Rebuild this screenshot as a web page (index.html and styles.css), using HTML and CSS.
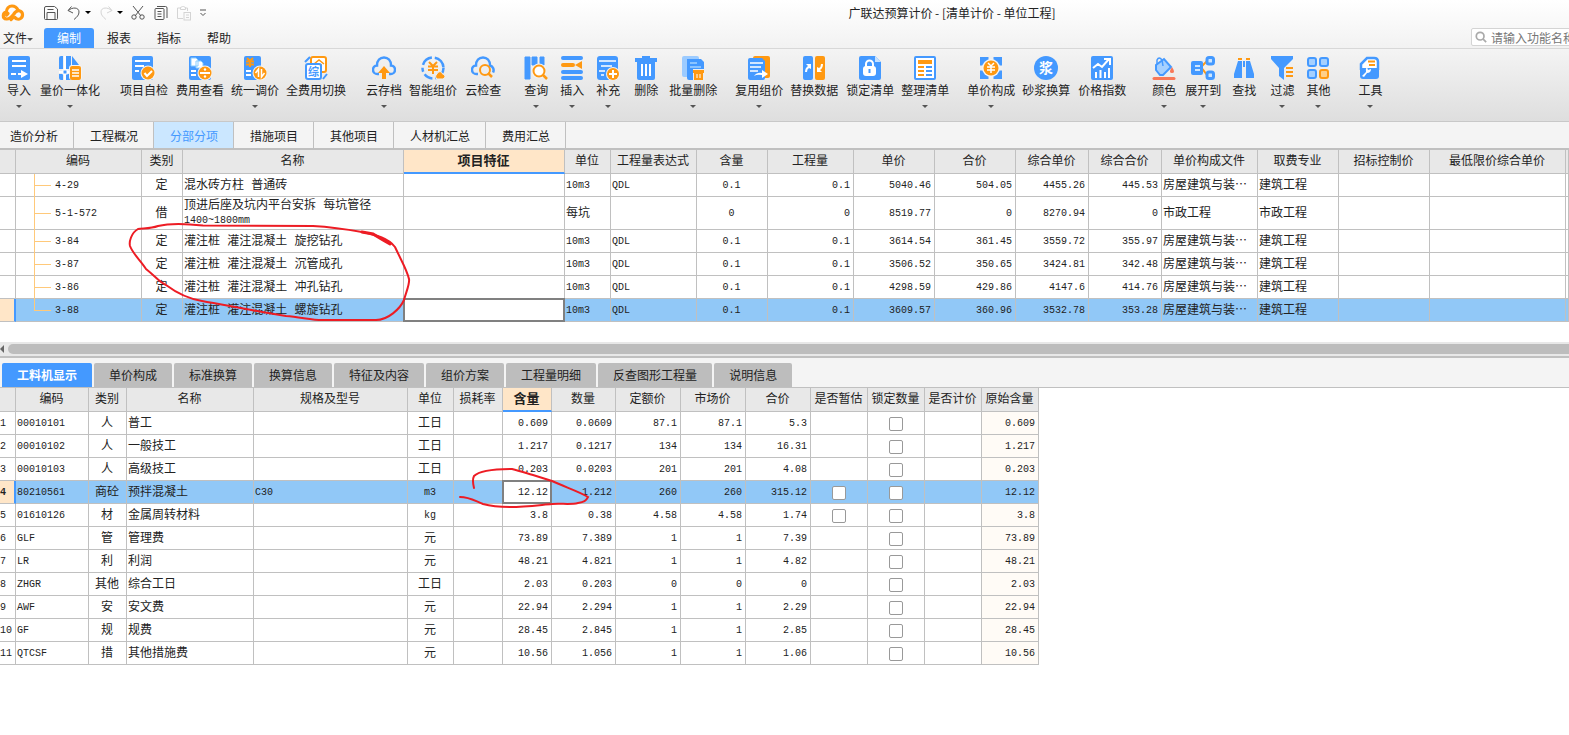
FILE: index.html
```
<!DOCTYPE html>
<html lang="zh-CN">
<head>
<meta charset="UTF-8">
<meta name="viewport" content="width=device-width, initial-scale=1.0">
<title>广联达预算计价</title>
<link rel="stylesheet" href="styles.css">
</head>
<body>
<header class="top">
  <div class="title-bar">
    <svg class="logo" viewBox="0 0 24 18"><g fill="none" stroke="#ff9912" stroke-width="3.200" stroke-linecap="round"><path d="M5.500 8.500C5 4.500 8 2 11 2c3.500 0 5 2 6 4"/><path d="M5.500 8C1.500 8.500 1 14.500 5.500 15c3 .3 5-2 7-4.500 2-3 4-4.500 6.500-3.500 3 1 3.500 5.500.5 7.500-2 1.200-4.500.5-5.500-1"/><path d="M7 9.500l-1.500 1.500M10 15.500l2-2"/></g></svg>
    <div class="quick">
      <button aria-label="保存"><svg viewBox="0 0 16 16"><path d="M3 1.500h8.500L14.500 4v9.500a1 1 0 0 1-1 1h-11a1 1 0 0 1-1-1V3a1.500 1.500 0 0 1 1.500-1.500zM4 14V7.500h8V14M4.500 4.500h6"/></svg></button>
      <button aria-label="撤销"><svg viewBox="0 0 16 16"><path d="M5.500 1.500L2 5.500l5 2.500M2.500 5.500C6 2 13 2 13 7c0 3-2 5-5 7.500"/></svg></button>
      <span class="caret"></span>
      <button class="off" aria-label="重做"><svg viewBox="0 0 16 16"><path d="M10.500 1.500L14 5.500 9 8M13.500 5.500C10 2 3 2 3 7c0 3 2 5 5 7.500"/></svg></button>
      <span class="caret"></span>
      <button aria-label="剪切"><svg viewBox="0 0 16 16"><path d="M3 1l8 10M13 1L5 11"/><circle cx="4" cy="12" r="2.200"/><circle cx="12" cy="12" r="2.200"/></svg></button>
      <button aria-label="复制"><svg viewBox="0 0 16 16"><rect x="2" y="3.500" width="9" height="11" rx="1"/><path d="M4 1.500h8.500a1.500 1.500 0 0 1 1.500 1.500v10M4.500 6.500h4M4.500 9h4M4.500 11.500h4"/></svg></button>
      <button class="off" aria-label="粘贴"><svg viewBox="0 0 16 16"><path d="M7 13.500H1.500V3H5M9 3h2.500v3M4.500 4.500v-2l2-1h1l2 1v2z"/><rect x="8" y="7.500" width="6.500" height="7.500"/><path d="M10 10h3M10 12.500h3"/></svg></button>
      <button class="more" aria-label="更多"><svg viewBox="0 0 8 8"><path d="M1 1h6M1.500 4L4 6.500 6.500 4"/></svg></button>
    </div>
    <div class="title">广联达预算计价 - [清单计价 - 单位工程]</div>
  </div>
  <div class="menu-bar">
    <button class="file">文件<span class="arrow"></span></button>
    <button class="active">编制</button>
    <button>报表</button>
    <button>指标</button>
    <button>帮助</button>
    <label class="search">
      <svg viewBox="0 0 14 14"><circle cx="6" cy="6" r="4.500"/><path d="M9.500 9.500L13 13"/></svg>
      <input type="text" placeholder="请输入功能名称" aria-label="搜索功能">
    </label>
  </div>
</header>

<div class="ribbon">
  <div class="group">
    <button class="tool short"><svg viewBox="0 0 24 24"><rect x="1" width="22" height="24" rx="2" fill="#49f"/><path d="M5 5h14M5 10h14" stroke="#fff" stroke-width="2"/><path d="M4 18h5M11 18h6" stroke="#fff" stroke-width="2"/><path d="M14 14l7 4-7 4z" fill="#fff"/></svg>导入<span class="arrow"></span></button>
    <button class="tool"><svg viewBox="0 0 24 24"><path d="M1 2a2 2 0 0 1 2-2h2v13H1zM6 0h7v13H6zM14 0l7 9h-7zM1 18h4v6H3a2 2 0 0 1-2-2zM8 18h5v6H8z" fill="#49f"/><path d="M7 0v24M1 16h12" stroke="#fff" stroke-width="2"/><rect x="5" y="14" width="4" height="4" fill="#49f" stroke="#fff"/><rect x="11" y="9" width="13" height="15" rx="3" fill="#f4f4f4"/><rect x="12" y="10" width="11" height="14" rx="2" fill="#ff9912"/><path d="M14 14h7M14 17h7M14 20h7" stroke="#fff" stroke-width="1.500"/></svg>量价一体化<span class="arrow"></span></button>
  </div>
  <div class="group">
    <button class="tool plain"><svg viewBox="0 0 24 24"><rect x="0" width="21" height="24" rx="2" fill="#49f"/><path d="M3 5h15M3 10h9M3 15h4" stroke="#fff" stroke-width="2"/><circle cx="16" cy="17" r="7.500" fill="#f4f4f4"/><circle cx="16" cy="17" r="6.500" fill="#ff9912"/><path d="M12.500 17l2.500 3 5-5" stroke="#fff" stroke-width="2" fill="none"/></svg>项目自检</button>
    <button class="tool plain"><svg viewBox="0 0 24 24"><rect x="1" width="22" height="24" rx="2" fill="#49f"/><path d="M3 2h5l2 2v6H3zM8 5h5l2 2v5H8z" fill="#fff" stroke="#8cf"/><path d="M3 15h5M3 19h5" stroke="#fff" stroke-width="2"/><circle cx="17" cy="17" r="7.500" fill="#f4f4f4"/><circle cx="17" cy="17" r="6.500" fill="#ff9912"/><path d="M12 17h10" stroke="#fff" stroke-width="2"/><circle cx="17" cy="13.500" r="1.200" fill="#fff"/><circle cx="17" cy="20.500" r="1.200" fill="#fff"/></svg>费用查看</button>
    <button class="tool"><svg viewBox="0 0 24 24"><rect x="1" width="17" height="24" rx="2" fill="#49f"/><path d="M4 2l3 3 3-3M3 5.500h8M3 8.500h8M7 5v6" stroke="#ff9912" stroke-width="2" fill="none"/><path d="M3 15h5M3 19h5" stroke="#fff" stroke-width="2"/><circle cx="17" cy="17" r="7.500" fill="#f4f4f4"/><circle cx="17" cy="17" r="6.500" fill="#ff9912"/><path d="M15.500 21v-8l-3 4M18.500 13v8l3-4" stroke="#fff" stroke-width="1.500" fill="none"/></svg>统一调价<span class="arrow"></span></button>
    <button class="tool plain"><svg viewBox="0 0 24 24"><rect x="7" y="1" width="15" height="15" rx="2" fill="#fff" stroke="#ff9912" stroke-width="2"/><path d="M10 8l5-4 5 4M12 9h6M15 9v5" stroke="#ff9912" stroke-width="1.500" fill="none"/><path d="M1 6L6 1M19 23l4-5" stroke="#49f" stroke-width="2"/><rect x="2" y="8" width="15" height="15" rx="2" fill="#fff" stroke="#49f" stroke-width="2"/><text x="4" y="20" font-size="11" font-weight="700" fill="#49f">综</text></svg>全费用切换</button>
  </div>
  <div class="group">
    <button class="tool"><svg viewBox="0 0 24 24"><path d="M7 18H5.500a4.200 4.200 0 0 1-.5-8.500C5 4.500 8 1.500 12 1.500s7 3 7 8a4.200 4.200 0 0 1-.5 8.500H17" fill="none" stroke="#49f" stroke-width="2.500"/><path d="M12 10l6 7h-4v6h-4v-6H6z" fill="#ff9912"/></svg>云存档<span class="arrow"></span></button>
    <button class="tool plain"><svg viewBox="0 0 24 24"><circle cx="12" cy="12" r="10.500" fill="none" stroke="#49f" stroke-width="2.500" stroke-dasharray="14 3 9 3 4 3 12 3"/><path d="M8 6l4 4 4-4M7 10.500h10M7 14h10M12 9v9" stroke="#ff9912" stroke-width="2" fill="none"/><path d="M16 23a3 3 0 0 1 0-5c1-3 5-3 5.500 0a2.500 2.500 0 0 1 0 5z" fill="#ff9912" stroke="#f0f0f0"/></svg>智能组价</button>
    <button class="tool plain"><svg viewBox="0 0 24 24"><path d="M7 18H5.500a4.200 4.200 0 0 1-.5-8.500C5 4.500 8 1.500 12 1.500s7 3 7 8c3 1 4.500 4 3 7" fill="none" stroke="#49f" stroke-width="2.500"/><circle cx="14" cy="14" r="5" fill="none" stroke="#ff9912" stroke-width="2"/><path d="M17 17l4 4" stroke="#ff9912" stroke-width="2.500"/></svg>云检查</button>
  </div>
  <div class="group">
    <button class="tool short"><svg viewBox="0 0 24 24"><path d="M1 1h5v22H1zM8 1h5v8H8zM16 1h4v8h-4z" fill="#49f" stroke="#49f" stroke-linejoin="round"/><circle cx="15" cy="15" r="7.500" fill="#f2f2f2"/><circle cx="15" cy="15" r="5.500" fill="#fff" stroke="#ff9912" stroke-width="2"/><path d="M19 19l4 4" stroke="#ff9912" stroke-width="2.500"/></svg>查询<span class="arrow"></span></button>
    <button class="tool short"><svg viewBox="0 0 24 24"><path d="M3 2h18M3 16h18M3 22h18" stroke="#49f" stroke-width="4" stroke-linecap="round"/><path d="M3 9h10" stroke="#ff9912" stroke-width="4" stroke-linecap="round"/><path d="M15 9l7-4v8z" fill="#ff9912"/></svg>插入<span class="arrow"></span></button>
    <button class="tool short"><svg viewBox="0 0 24 24"><rect x="1" width="21" height="24" rx="3" fill="#49f"/><path d="M3 5h17M5 10h11M3 15h6M5 19h3" stroke="#fff" stroke-width="1.500"/><circle cx="17" cy="18" r="7" fill="#f2f2f2"/><circle cx="17" cy="18" r="6" fill="#ff9912"/><path d="M13 18h8M17 14v8" stroke="#fff" stroke-width="2"/></svg>补充<span class="arrow"></span></button>
    <button class="tool short plain"><svg viewBox="0 0 24 24"><path d="M1 2h7V0h8v2h7v4H1z" fill="#49f"/><path d="M3 5h18v17a2 2 0 0 1-2 2H5a2 2 0 0 1-2-2z" fill="#49f"/><path d="M8 8v12M12 8v12M16 8v12" stroke="#fff" stroke-width="2"/></svg>删除</button>
    <button class="tool"><svg viewBox="0 0 24 24"><rect x="1" width="17" height="21" rx="2" fill="#9ccbff"/><path d="M6 3h14l3 3v17a1 1 0 0 1-1 1H8a2 2 0 0 1-2-2z" fill="#49f"/><path d="M9 7h7M9 11h11" stroke="#8cc4ff" stroke-width="2"/><path d="M12 13h12v11H12z" fill="#eee"/><path d="M12 14h11v3H12zM13 17h9v7h-9z" fill="#ff9912"/><path d="M16 18v4M19 18v4" stroke="#fff"/></svg>批量删除<span class="arrow"></span></button>
  </div>
  <div class="group near">
    <button class="tool"><svg viewBox="0 0 24 24"><rect x="6" width="17" height="22" rx="2" fill="#ff9912"/><path d="M1 4a2 2 0 0 1 2-2h12l3 3v17a2 2 0 0 1-2 2H3a2 2 0 0 1-2-2z" fill="#49f"/><path d="M3 7h13M3 11h11M3 15h8" stroke="#fff" stroke-width="1.500"/><path d="M7 20q3-4 8-3v-3l6 4-6 4v-3q-5-1-8 1z" fill="#fff"/></svg>复用组价<span class="arrow"></span></button>
    <button class="tool plain"><svg viewBox="0 0 24 24"><rect x="1" width="10" height="24" rx="2" fill="#49f"/><rect x="13" width="10" height="24" rx="2" fill="#ff9912"/><path d="M3 16q0-4 3-6L4 8h5v5l-2-1q-2 1-2 4zM21 8q0 4-3 6l2 2h-5v-5l2 1q2-1 2-4z" fill="#fff"/></svg>替换数据</button>
    <button class="tool plain"><svg viewBox="0 0 24 24"><path d="M1 2a2 2 0 0 1 2-2h14l6 6v16a2 2 0 0 1-2 2H3a2 2 0 0 1-2-2z" fill="#49f"/><path d="M17 0l6 6h-6z" fill="#c7e2ff"/><rect x="5" y="10" width="13" height="10" rx="3" fill="#fff"/><path d="M8 11V8a3.500 3.500 0 0 1 7 0v3" fill="none" stroke="#fff" stroke-width="2"/><path d="M11.500 13v4" stroke="#49f" stroke-width="2"/></svg>锁定清单</button>
    <button class="tool"><svg viewBox="0 0 24 24"><rect x="2" y="1" width="20" height="22" rx="1" fill="#fff" stroke="#49f" stroke-width="2"/><path d="M5 4h14v4H5z" fill="#ff9912"/><path d="M5 11h6M5 15h6M5 19h6" stroke="#ff9912" stroke-width="2"/><path d="M13 11h6M13 15h6M13 19h6" stroke="#49f" stroke-width="2"/></svg>整理清单<span class="arrow"></span></button>
  </div>
  <div class="group near">
    <button class="tool"><svg viewBox="0 0 24 24"><path d="M1 1h22v22H1z" fill="#49f"/><path d="M12 0v24M0 12h24" stroke="#f0f0f0" stroke-width="5"/><circle cx="12" cy="12" r="9" fill="#f4f4f4"/><circle cx="12" cy="12" r="7.500" fill="#ff9912"/><path d="M9 7l3 3 3-3M8 11h8M8 14h8M12 10v7" fill="none" stroke="#fff" stroke-width="1.500"/></svg>单价构成<span class="arrow"></span></button>
    <button class="tool plain"><svg viewBox="0 0 24 24"><circle cx="12" cy="12" r="12" fill="#49f"/><text x="5" y="17" font-size="14" font-weight="700" fill="#fff">浆</text></svg>砂浆换算</button>
    <button class="tool plain"><svg viewBox="0 0 24 24"><rect x="1" width="22" height="24" rx="2" fill="#49f"/><path d="M3 12l5-4 4 3 7-8M14 3h6v6M6 16v6M10.500 14v8M15 16v6M19 12v10" fill="none" stroke="#fff" stroke-width="2"/></svg>价格指数</button>
  </div>
  <div class="group far">
    <button class="tool short"><svg viewBox="0 0 24 24"><path d="M4 9l8-6 7 8-8 8H8l-4-5z" fill="#a5d0ff" stroke="#49f" stroke-width="2"/><path d="M5 8V4q2-4 5 0l1 6" fill="none" stroke="#49f" stroke-width="1.500"/><path d="M20 11q4 6 0 6t0-6z" fill="#f87858"/><path d="M2 22.500h20" stroke="#f87858" stroke-width="3" stroke-linecap="round"/></svg>颜色<span class="arrow"></span></button>
    <button class="tool"><svg viewBox="0 0 24 24"><path d="M16 5l-6 6 6 8" fill="none" stroke="#ff9912" stroke-width="2"/><rect y="5" width="12" height="14" rx="2" fill="#49f"/><path d="M4 10h5M4 14h5" stroke="#cde6ff" stroke-width="2"/><rect x="16" y="1.500" width="6.500" height="6.500" rx="2" fill="#cde6ff" stroke="#49f" stroke-width="3"/><rect x="16" y="16" width="6.500" height="6.500" rx="2" fill="#cde6ff" stroke="#49f" stroke-width="3"/></svg>展开到<span class="arrow"></span></button>
    <button class="tool short plain"><svg viewBox="0 0 24 24"><path d="M6 2h4v2H6zM14 2h4v2h-4z" fill="#ff9912"/><path d="M6 5h4v17H2v-4zM14 5h4l4 13v4h-8zM11 5h2v6h-2z" fill="#49f"/></svg>查找</button>
    <button class="tool short"><svg viewBox="0 0 24 24"><path d="M1 0h22v3l-9 9v12l-5-4v-8L1 3z" fill="#49f"/><path d="M16 12h7M16 16h7M16 20h7" stroke="#ff9912" stroke-width="2"/></svg>过滤<span class="arrow"></span></button>
    <button class="tool short"><svg viewBox="0 0 24 24"><g fill="#a5d0ff" stroke="#49f" stroke-width="2"><rect x="2" y="2" width="8" height="8" rx="2"/><rect x="14" y="2" width="8" height="8" rx="2"/><rect x="2" y="14" width="8" height="8" rx="2"/><rect x="14" y="14" width="8" height="8" rx="2" fill="#ffd08a" stroke="#ff9912"/></g></svg>其他<span class="arrow"></span></button>
  </div>
  <div class="group far">
    <button class="tool short"><svg viewBox="0 0 24 24"><path d="M3 14V8l6-6h7q4 0 4 4v8" fill="#fff" stroke="#49f" stroke-width="2.500"/><path d="M10 5.500h7M11 9h6" stroke="#ff9912" stroke-width="2"/><path d="M2 12h19v8a3 3 0 0 1-3 3H5a3 3 0 0 1-3-3z" fill="#49f"/><path d="M4 20l4-4q-1-3 1-5l1 3 3-1q0 4-4 4l-3 4z" fill="#fff"/></svg>工具<span class="arrow"></span></button>
  </div>
</div>

<nav class="page-tabs">
  <a href="#">造价分析</a>
  <a href="#">工程概况</a>
  <a href="#" class="active">分部分项</a>
  <a href="#">措施项目</a>
  <a href="#">其他项目</a>
  <a href="#">人材机汇总</a>
  <a href="#">费用汇总</a>
</nav>

<div class="list-pane">
  <table class="grid full">
    <colgroup>
      <col class="w16"><col class="w126"><col class="w41"><col class="w221"><col class="w161"><col class="w46"><col class="w86"><col class="w71"><col class="w86"><col class="w81"><col class="w81"><col class="w73"><col class="w73"><col class="w96"><col class="w81"><col class="w91"><col class="w136"><col>
    </colgroup>
    <thead>
      <tr><th></th><th>编码</th><th>类别</th><th>名称</th><th class="sorted">项目特征</th><th>单位</th><th>工程量表达式</th><th>含量</th><th>工程量</th><th>单价</th><th>合价</th><th>综合单价</th><th>综合合价</th><th>单价构成文件</th><th>取费专业</th><th>招标控制价</th><th>最低限价综合单价</th><th></th></tr>
    </thead>
    <tbody>
      <tr><td></td><td class="code tree">4-29</td><td class="mid">定</td><td>混水砖方柱 普通砖</td><td></td><td class="code">10m3</td><td class="code">QDL</td><td class="code mid">0.1</td><td class="num">0.1</td><td class="num">5040.46</td><td class="num">504.05</td><td class="num">4455.26</td><td class="num">445.53</td><td>房屋建筑与装⋯</td><td>建筑工程</td><td></td><td></td><td></td></tr>
      <tr class="tall"><td></td><td class="code tree">5-1-572</td><td class="mid">借</td><td>顶进后座及坑内平台安拆 每坑管径<br><span class="code">1400~1800mm</span></td><td></td><td>每坑</td><td></td><td class="code mid">0</td><td class="num">0</td><td class="num">8519.77</td><td class="num">0</td><td class="num">8270.94</td><td class="num">0</td><td>市政工程</td><td>市政工程</td><td></td><td></td><td></td></tr>
      <tr><td></td><td class="code tree">3-84</td><td class="mid">定</td><td>灌注桩 灌注混凝土 旋挖钻孔</td><td></td><td class="code">10m3</td><td class="code">QDL</td><td class="code mid">0.1</td><td class="num">0.1</td><td class="num">3614.54</td><td class="num">361.45</td><td class="num">3559.72</td><td class="num">355.97</td><td>房屋建筑与装⋯</td><td>建筑工程</td><td></td><td></td><td></td></tr>
      <tr><td></td><td class="code tree">3-87</td><td class="mid">定</td><td>灌注桩 灌注混凝土 沉管成孔</td><td></td><td class="code">10m3</td><td class="code">QDL</td><td class="code mid">0.1</td><td class="num">0.1</td><td class="num">3506.52</td><td class="num">350.65</td><td class="num">3424.81</td><td class="num">342.48</td><td>房屋建筑与装⋯</td><td>建筑工程</td><td></td><td></td><td></td></tr>
      <tr><td></td><td class="code tree">3-86</td><td class="mid">定</td><td>灌注桩 灌注混凝土 冲孔钻孔</td><td></td><td class="code">10m3</td><td class="code">QDL</td><td class="code mid">0.1</td><td class="num">0.1</td><td class="num">4298.59</td><td class="num">429.86</td><td class="num">4147.6</td><td class="num">414.76</td><td>房屋建筑与装⋯</td><td>建筑工程</td><td></td><td></td><td></td></tr>
      <tr class="selected"><td></td><td class="code tree">3-88</td><td class="mid">定</td><td>灌注桩 灌注混凝土 螺旋钻孔</td><td class="current"></td><td class="code">10m3</td><td class="code">QDL</td><td class="code mid">0.1</td><td class="num">0.1</td><td class="num">3609.57</td><td class="num">360.96</td><td class="num">3532.78</td><td class="num">353.28</td><td>房屋建筑与装⋯</td><td>建筑工程</td><td></td><td></td><td></td></tr>
    </tbody>
  </table>
  <div class="scrollbar"><span class="scroll-left"></span><div class="thumb"></div></div>
</div>

<div class="detail-pane">
  <nav class="detail-tabs">
    <button class="active">工料机显示</button>
    <button>单价构成</button>
    <button>标准换算</button>
    <button>换算信息</button>
    <button>特征及内容</button>
    <button>组价方案</button>
    <button>工程量明细</button>
    <button>反查图形工程量</button>
    <button>说明信息</button>
  </nav>
  <table class="grid detail">
    <colgroup>
      <col class="w16"><col class="w73"><col class="w38"><col class="w127"><col class="w154"><col class="w46"><col class="w49"><col class="w49"><col class="w64"><col class="w65"><col class="w65"><col class="w65"><col class="w57"><col class="w57"><col class="w57"><col class="w57">
    </colgroup>
    <thead>
      <tr><th></th><th>编码</th><th>类别</th><th>名称</th><th>规格及型号</th><th>单位</th><th>损耗率</th><th class="sorted">含量</th><th>数量</th><th>定额价</th><th>市场价</th><th>合价</th><th>是否暂估</th><th>锁定数量</th><th>是否计价</th><th>原始含量</th></tr>
    </thead>
    <tbody>
      <tr><td class="row-no">1</td><td class="code">00010101</td><td class="mid">人</td><td>普工</td><td></td><td class="mid">工日</td><td></td><td class="num">0.609</td><td class="num">0.0609</td><td class="num">87.1</td><td class="num">87.1</td><td class="num">5.3</td><td></td><td class="mid"><input type="checkbox" aria-label="锁定数量"></td><td></td><td class="num origin">0.609</td></tr>
      <tr><td class="row-no">2</td><td class="code">00010102</td><td class="mid">人</td><td>一般技工</td><td></td><td class="mid">工日</td><td></td><td class="num">1.217</td><td class="num">0.1217</td><td class="num">134</td><td class="num">134</td><td class="num">16.31</td><td></td><td class="mid"><input type="checkbox" aria-label="锁定数量"></td><td></td><td class="num origin">1.217</td></tr>
      <tr><td class="row-no">3</td><td class="code">00010103</td><td class="mid">人</td><td>高级技工</td><td></td><td class="mid">工日</td><td></td><td class="num">0.203</td><td class="num">0.0203</td><td class="num">201</td><td class="num">201</td><td class="num">4.08</td><td></td><td class="mid"><input type="checkbox" aria-label="锁定数量"></td><td></td><td class="num origin">0.203</td></tr>
      <tr class="selected"><td class="row-no">4</td><td class="code">80210561</td><td class="mid">商砼</td><td>预拌混凝土</td><td class="code">C30</td><td class="code mid">m3</td><td></td><td class="num current">12.12</td><td class="num">1.212</td><td class="num">260</td><td class="num">260</td><td class="num">315.12</td><td class="mid"><input type="checkbox" aria-label="是否暂估"></td><td class="mid"><input type="checkbox" aria-label="锁定数量"></td><td></td><td class="num origin">12.12</td></tr>
      <tr><td class="row-no">5</td><td class="code">01610126</td><td class="mid">材</td><td>金属周转材料</td><td></td><td class="code mid">kg</td><td></td><td class="num">3.8</td><td class="num">0.38</td><td class="num">4.58</td><td class="num">4.58</td><td class="num">1.74</td><td class="mid"><input type="checkbox" aria-label="是否暂估"></td><td class="mid"><input type="checkbox" aria-label="锁定数量"></td><td></td><td class="num origin">3.8</td></tr>
      <tr><td class="row-no">6</td><td class="code">GLF</td><td class="mid">管</td><td>管理费</td><td></td><td class="mid">元</td><td></td><td class="num">73.89</td><td class="num">7.389</td><td class="num">1</td><td class="num">1</td><td class="num">7.39</td><td></td><td class="mid"><input type="checkbox" aria-label="锁定数量"></td><td></td><td class="num origin">73.89</td></tr>
      <tr><td class="row-no">7</td><td class="code">LR</td><td class="mid">利</td><td>利润</td><td></td><td class="mid">元</td><td></td><td class="num">48.21</td><td class="num">4.821</td><td class="num">1</td><td class="num">1</td><td class="num">4.82</td><td></td><td class="mid"><input type="checkbox" aria-label="锁定数量"></td><td></td><td class="num origin">48.21</td></tr>
      <tr><td class="row-no">8</td><td class="code">ZHGR</td><td class="mid">其他</td><td>综合工日</td><td></td><td class="mid">工日</td><td></td><td class="num">2.03</td><td class="num">0.203</td><td class="num">0</td><td class="num">0</td><td class="num">0</td><td></td><td class="mid"><input type="checkbox" aria-label="锁定数量"></td><td></td><td class="num origin">2.03</td></tr>
      <tr><td class="row-no">9</td><td class="code">AWF</td><td class="mid">安</td><td>安文费</td><td></td><td class="mid">元</td><td></td><td class="num">22.94</td><td class="num">2.294</td><td class="num">1</td><td class="num">1</td><td class="num">2.29</td><td></td><td class="mid"><input type="checkbox" aria-label="锁定数量"></td><td></td><td class="num origin">22.94</td></tr>
      <tr><td class="row-no">10</td><td class="code">GF</td><td class="mid">规</td><td>规费</td><td></td><td class="mid">元</td><td></td><td class="num">28.45</td><td class="num">2.845</td><td class="num">1</td><td class="num">1</td><td class="num">2.85</td><td></td><td class="mid"><input type="checkbox" aria-label="锁定数量"></td><td></td><td class="num origin">28.45</td></tr>
      <tr><td class="row-no">11</td><td class="code">QTCSF</td><td class="mid">措</td><td>其他措施费</td><td></td><td class="mid">元</td><td></td><td class="num">10.56</td><td class="num">1.056</td><td class="num">1</td><td class="num">1</td><td class="num">1.06</td><td></td><td class="mid"><input type="checkbox" aria-label="锁定数量"></td><td></td><td class="num origin">10.56</td></tr>
    </tbody>
  </table>
</div>

<!-- red pen marks over both grids -->
<svg class="marks" width="620" height="520" viewBox="0 0 620 520">
  <path d="M362 232C345 229 330 227 313 226L203 225.500C190 224 170 223 158 226C150 229 142 228 138 229C131 233 129 242 130 246C133 254 141 261 146 269C155 276 160 283 166 285C178 294 190 299 202 301C225 305 260 312 286 316C300 317 312 320 322 320L376 320C388 320 400 309 404 300C406 292 410 284 409 279C407 270 402 262 395 247C388 238 376 235 362 232"/>
  <path class="thick" d="M362 232L373 234L383 240L390 244"/>
  <path d="M474 488C473 484 472 480 474 476C480 470 495 469 512 469C520 471 526 473 533 475L552 481C565 487 580 492 588 497C586 501 584 502 578 503C570 505 560 503 552 504C540 505 525 507 510 507C500 507 490 506 483 504C475 501 470 497 460 497"/>
</svg>
</body>
</html>
```
FILE: styles.css
```
* {
  box-sizing: border-box;
}

body {
  position: relative;
  margin: 0;
  background-color: #fff;
  color: #222;
  font-family: "Noto Sans CJK SC", sans-serif;
  font-size: 12px;
  overflow-x: hidden;
}

button {
  border: none;
  background: none;
  padding: 0;
  color: inherit;
  font: inherit;
  white-space: nowrap;
}

a {
  color: inherit;
  text-decoration: none;
}

.top {
  background: linear-gradient(#fff, #f2f2f2);
  border-bottom: 1px solid #d8d8d8;
}

/* title bar */
.title-bar {
  display: flex;
  align-items: center;
  height: 28px;
  padding-left: 1px;
  padding-bottom: 3px;
}

.logo {
  width: 24px;
  height: 18px;
}

.quick {
  display: flex;
  align-items: center;
  gap: 7px;
  width: 310px;
  padding-left: 18px;
}

.quick button {
  width: 16px;
  height: 16px;
}

.quick svg {
  display: block;
  width: 100%;
  fill: none;
  stroke: #555;
}

.quick .off svg {
  stroke: #d4d4d4;
}

.quick .more {
  width: 8px;
  height: 8px;
}

.caret {
  margin-left: -4px;
  border: 3px solid transparent;
  border-top-color: #000;
  border-bottom: none;
}

.title {
  flex: 1;
  text-align: center;
}

/* menu */
.menu-bar {
  display: flex;
  height: 20px;
}

.menu-bar button {
  width: 50px;
  line-height: 20px;
}

.menu-bar .file {
  width: 44px;
  padding-left: 3px;
  text-align: left;
}

.menu-bar .active {
  background-color: #49f;
  border-radius: 3px 3px 0 0;
  color: #fff;
}

.arrow {
  display: inline-block;
  border: 3px solid transparent;
  border-top-color: #555;
  border-bottom: none;
  vertical-align: middle;
}

.search {
  display: flex;
  align-items: center;
  gap: 4px;
  width: 110px;
  height: 18px;
  margin-left: auto;
  margin-right: -12px;
  padding-left: 3px;
  border: 1px solid #d4d4d4;
  border-radius: 2px;
  background-color: #fff;
}

.search svg {
  flex: none;
  width: 12px;
  height: 12px;
  fill: none;
  stroke: #aaa;
  stroke-width: 2;
}

.search input {
  width: 90px;
  height: 16px;
  padding: 0;
  border: none;
  background: none;
  font: inherit;
}

.search input::placeholder {
  color: #777;
}

/* ribbon */
.ribbon {
  display: flex;
  height: 73px;
  padding: 7px 0 0 1px;
  background: linear-gradient(#f4f4f4, #dedede);
  border-bottom: 1px solid #c8c8c8;
}

.group {
  display: flex;
  align-items: flex-start;
}

.group + .group {
  margin-left: 13px;
}

.group + .near {
  margin-left: 12px;
}

.group + .far {
  margin-left: 16px;
}

.tool {
  display: flex;
  flex-direction: column;
  align-items: center;
  padding: 0 3px;
  line-height: 20px;
}

.tool.plain {
  padding: 0 4px;
}

.tool.short {
  padding: 0 6px;
}

.tool.short.plain {
  padding: 0 8px;
}

.tool svg {
  width: 24px;
  height: 24px;
}

.tool .arrow {
  margin-top: 5px;
}

/* page tabs */
.page-tabs {
  display: flex;
  height: 28px;
  background-color: #f4f4f4;
  border-bottom: 2px solid #c0c0c0;
}

.page-tabs a {
  padding: 0 15px 0 16px;
  border-right: 1px solid #c0c0c0;
  line-height: 28px;
}

.page-tabs a:first-child {
  padding-left: 10px;
}

.page-tabs .active {
  background-color: #cbe7ff;
  color: #49f;
}

/* grids */
.grid {
  table-layout: fixed;
  border-spacing: 0;
  line-height: 14px;
  font-family: "Liberation Mono", "Noto Sans CJK SC", monospace;
}

.grid.full {
  width: 100%;
}

.grid.detail {
  width: 1039px;
}

.grid th,
.grid td {
  height: 23px;
  padding: 1px 2px 0 1px;
  border-right: 1px solid #c0c0c0;
  border-bottom: 1px solid #c0c0c0;
  white-space: nowrap;
}

.grid th {
  height: 24px;
  padding: 1px 1px 0 0;
  background-color: #e8e8e8;
  font-weight: normal;
}

.grid th.sorted {
  background-color: #ffe6c8;
  border-bottom: 2px solid #49f;
  font-size: 13px;
  font-weight: bold;
}

.grid .tall td {
  height: 33px;
}

.grid .code,
.grid .num,
.grid .row-no {
  font-size: 10px;
}

.grid .num {
  padding-right: 3px;
  text-align: right;
}

.grid .mid {
  text-align: center;
}

.grid .row-no {
  padding: 1px 0 0;
}

.grid .origin {
  background-color: #fffbf6;
}

.grid .selected td {
  background-color: #91c8f7;
}

.grid .selected td:first-child {
  border-right: 2px solid #49f;
  background-color: #ffe6c8;
  font-weight: bold;
}

.grid .selected .current {
  position: relative;
  background-color: #fff;
}

.current::after {
  content: "";
  position: absolute;
  inset: -1px;
  border: 2px solid #808080;
}

.grid .tree {
  position: relative;
  padding-left: 39px;
}

.tree::before {
  content: "";
  position: absolute;
  left: 18px;
  top: 0;
  bottom: -1px;
  border-left: 1px solid #ffc97a;
}

.tree::after {
  content: "";
  position: absolute;
  left: 18px;
  top: 50%;
  width: 17px;
  border-top: 1px solid #ffc97a;
}

.selected .tree::before {
  bottom: 50%;
}

.grid input {
  appearance: none;
  display: block;
  width: 14px;
  height: 14px;
  margin: 0 auto;
  border: 1px solid #999;
  border-radius: 2px;
  background-color: #fff;
}

.w16 { width: 16px; }
.w38 { width: 38px; }
.w41 { width: 41px; }
.w46 { width: 46px; }
.w49 { width: 49px; }
.w57 { width: 57px; }
.w64 { width: 64px; }
.w65 { width: 65px; }
.w71 { width: 71px; }
.w73 { width: 73px; }
.w81 { width: 81px; }
.w86 { width: 86px; }
.w91 { width: 91px; }
.w96 { width: 96px; }
.w126 { width: 126px; }
.w127 { width: 127px; }
.w136 { width: 136px; }
.w154 { width: 154px; }
.w161 { width: 161px; }
.w221 { width: 221px; }

.scrollbar {
  display: flex;
  align-items: center;
  gap: 4px;
  height: 14px;
  margin-top: 20px;
  background-color: #e8e8e8;
}

.scroll-left {
  border: 4px solid transparent;
  border-right-color: #666;
  border-left: none;
}

.thumb {
  flex: 1;
  height: 10px;
  border-radius: 5px 0 0 5px;
  background-color: #bdbdbd;
}

/* lower pane */
.detail-pane {
  border-top: 2px solid #c0c0c0;
}

.detail-tabs {
  display: flex;
  gap: 2px;
  padding: 5px 2px 0;
  background-color: #f4f4f4;
  border-bottom: 1px solid #c0c0c0;
}

.detail-tabs button {
  padding: 0 15px;
  border-radius: 2px 2px 0 0;
  background-color: #bdbdbd;
  line-height: 24px;
}

.detail-tabs .active {
  background-color: #49f;
  color: #fff;
  font-weight: bold;
}

.marks {
  position: absolute;
  top: 0;
  left: 0;
  fill: none;
  stroke: #ed1c24;
  stroke-width: 2;
  stroke-linecap: round;
  pointer-events: none;
}

.marks .thick {
  stroke-width: 3;
}
```
